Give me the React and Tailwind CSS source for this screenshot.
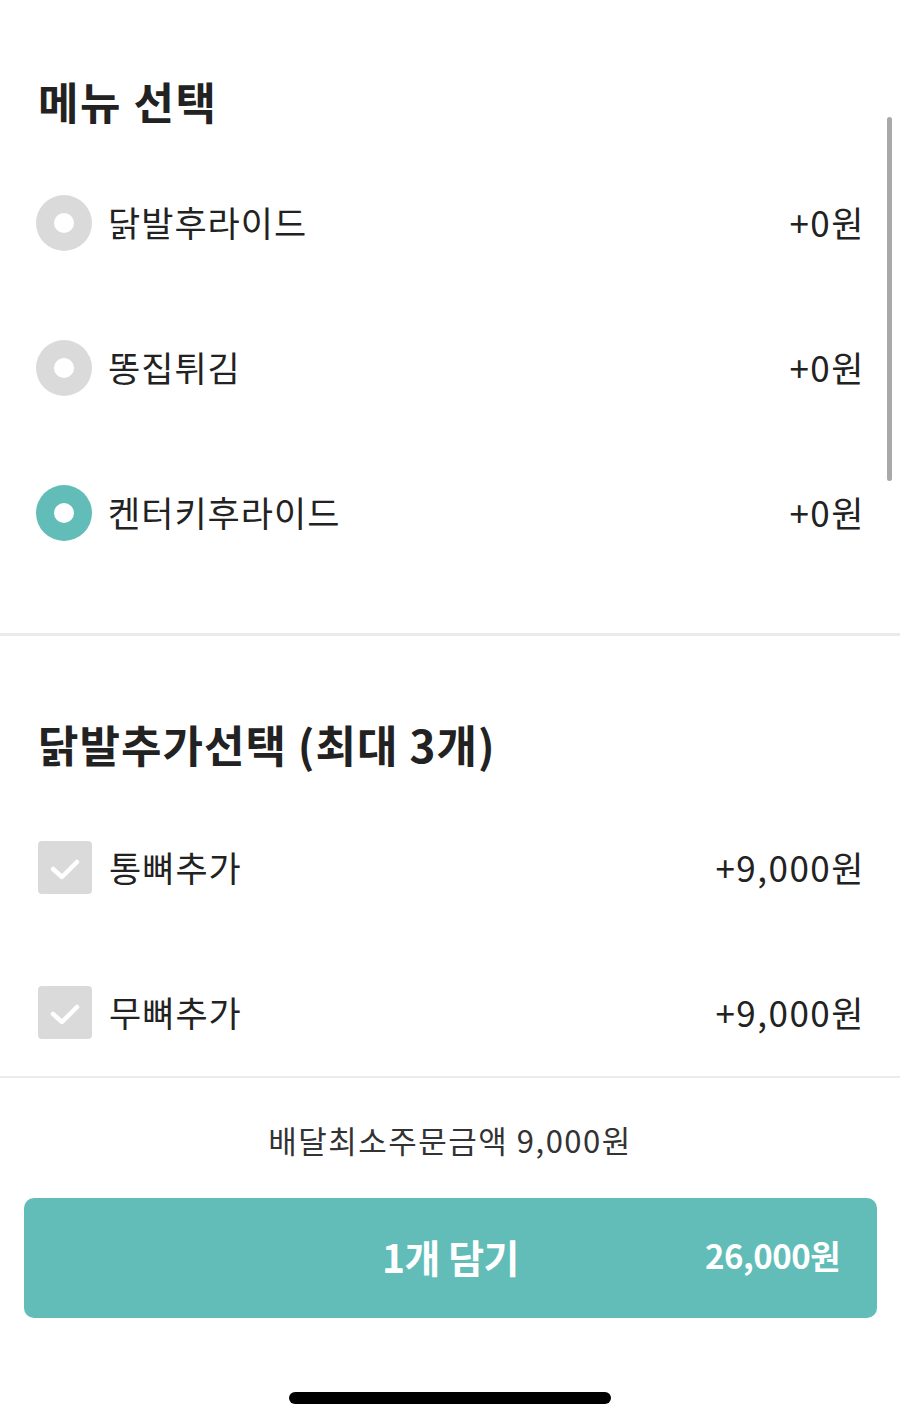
import React, { useState } from 'react'

const font = { fontFamily: '"Noto Sans CJK KR", "Noto Sans", sans-serif' }

const menus = [
  { name: '닭발후라이드', price: '+0원' },
  { name: '똥집튀김', price: '+0원' },
  { name: '켄터키후라이드', price: '+0원' },
]

const extras = [
  { name: '통뼈추가', price: '+9,000원' },
  { name: '무뼈추가', price: '+9,000원' },
]

function Radio({ checked }) {
  return (
    <span className={`flex h-[56px] w-[56px] shrink-0 items-center justify-center rounded-full ${checked ? 'bg-[#62bdb8]' : 'bg-[#dadada]'}`}>
      <span className="h-[20px] w-[20px] rounded-full bg-white" />
    </span>
  )
}

function Check({ checked }) {
  return (
    <span className={`flex h-[53px] w-[54px] shrink-0 items-center justify-center rounded-[4px] ${checked ? 'bg-[#62bdb8]' : 'bg-[#dadada]'}`}>
      <svg width="54" height="53" viewBox="0 0 54 53" fill="none">
        <path d="M15 28 L24 36 L39 21" stroke="white" strokeWidth="4.5" strokeLinecap="round" strokeLinejoin="round" />
      </svg>
    </span>
  )
}

export default function App() {
  const [menu, setMenu] = useState(2)
  const [picked, setPicked] = useState([])

  const toggle = (i) => {
    setPicked((prev) => (prev.includes(i) ? prev.filter((p) => p !== i) : [...prev, i]))
  }

  return (
    <div className="relative flex h-[1422px] w-[900px] flex-col bg-white text-[#222]" style={font}>
      {/* scrollbar */}
      <div className="absolute right-[8px] top-[117px] h-[364px] w-[5px] rounded-full bg-[#a9a9a9]" />

      <div className="h-[1076px] overflow-hidden">
        <section className="pl-[38px] pr-[35px] pt-[77px]">
          <h1 className="h-[48px] text-[44px] font-bold leading-[48px] tracking-[1.5px]">메뉴 선택</h1>
          <div className="mt-[24px]">
            {menus.map((m, i) => (
              <button
                key={m.name}
                type="button"
                onClick={() => setMenu(i)}
                className="flex h-[145px] w-full items-center text-left"
              >
                <span className="-ml-[2px] mt-[2px]"><Radio checked={menu === i} /></span>
                <span className="ml-[16px] flex-1 text-[35px] leading-none tracking-[1px]">{m.name}</span>
                <span className="text-[35px] leading-none tracking-[1.5px]">{m.price}</span>
              </button>
            ))}
          </div>
        </section>

        <div className="mt-[49px] h-[3px] bg-[#ebebeb]" />

        <section className="pl-[38px] pr-[35px] pt-[84px]">
          <h2 className="h-[48px] text-[44px] font-bold leading-[48px] tracking-[1px]">닭발추가선택 (최대 3개)</h2>
          <div className="mt-[26px]">
            {extras.map((e, i) => (
              <button
                key={e.name}
                type="button"
                onClick={() => toggle(i)}
                className="flex h-[145px] w-full items-center text-left"
              >
                <span className="mt-[2px]"><Check checked={picked.includes(i)} /></span>
                <span className="ml-[17px] flex-1 text-[35px] leading-none tracking-[1px]">{e.name}</span>
                <span className="text-[35px] leading-none tracking-[1.5px]">{e.price}</span>
              </button>
            ))}
          </div>
        </section>
      </div>

      <footer className="border-t-2 border-[#ebebeb] pt-[42px]">
        <p className="h-[40px] text-center text-[31px] leading-[40px] tracking-[1.5px] text-[#333]">배달최소주문금액 9,000원</p>
        <button
          type="button"
          className="ml-[24px] mt-[38px] grid h-[120px] w-[853px] grid-cols-[1fr_auto_1fr] items-center rounded-[10px] bg-[#62bdb8] text-white"
        >
          <span />
          <span className="-mt-[4px] text-[39px] font-bold tracking-[-0.5px]">1개 담기</span>
          <span className="-mt-[4px] justify-self-end pr-[37px] text-[33px] font-semibold tracking-[-0.5px]">26,000원</span>
        </button>
        <div className="mx-auto mt-[74px] h-[12px] w-[322px] rounded-full bg-black" />
      </footer>
    </div>
  )
}
